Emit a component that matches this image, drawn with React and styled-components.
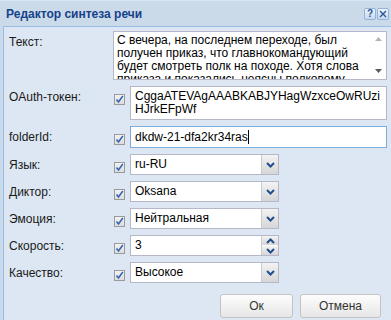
import React from "react";
import styled, { createGlobalStyle } from "styled-components";

const Global = createGlobalStyle`
  html, body { margin: 0; padding: 0; }
  body {
    background: #cbdae9;
    font-family: "Liberation Sans", Arial, sans-serif;
    overflow: hidden;
  }
`;

const Window = styled.div`
  width: 391px;
  height: 320px;
  background: #cbdae9;
  border-top: 1px solid #dbe5f1;
  box-sizing: border-box;
  display: flex;
  flex-direction: column;
  overflow: hidden;
`;

const Header = styled.div`
  height: 25px;
  flex: none;
  display: flex;
  align-items: center;
  justify-content: space-between;
  padding: 0 2px 0 6px;
`;

const Title = styled.div`
  font-size: 12px;
  font-weight: bold;
  color: #15428b;
`;

const Tools = styled.div`
  display: flex;
  gap: 1px;
  margin-top: 1px;
`;

const Tool = styled.div`
  width: 12px;
  height: 12px;
  box-sizing: border-box;
  border: 1px solid #94b4dc;
  border-radius: 2px;
  background: linear-gradient(#eef4fb, #c9d9ee);
  display: flex;
  align-items: center;
  justify-content: center;
  font-size: 10px;
  font-weight: bold;
  color: #2a5594;
  line-height: 1;
`;

const Body = styled.div`
  flex: 1;
  margin-left: 3px;
  border-left: 1px solid #99bbe8;
  border-top: 1px solid #99bbe8;
  background: #dde7f3;
  padding: 4px 4px 0 5px;
  display: flex;
  flex-direction: column;
`;

const Form = styled.div`
  display: flex;
  flex-direction: column;
  gap: 6px;
`;

const Row = styled.div`
  display: grid;
  grid-template-columns: 104px 17px 1fr;
  align-items: start;
`;

const Label = styled.div`
  font-size: 12px;
  line-height: 14px;
  padding-top: 4px;
  color: #1a1a1a;
`;

const CheckCell = styled.div`
  padding-top: 5px;
  padding-left: 1px;
  height: 11px;
`;

const TextBox = styled.div`
  grid-column: 2 / 4;
  height: 49px;
  box-sizing: border-box;
  border: 1px solid #b5b8c8;
  background: #fff;
  display: flex;
`;

const TextContent = styled.div`
  flex: 1;
  overflow: hidden;
  padding: 2px 3px;
  font-size: 12px;
  line-height: 13px;
  color: #000;
`;

const ScrollBar = styled.div`
  width: 15px;
  display: flex;
  flex-direction: column;
  justify-content: space-between;
  align-items: center;
  padding: 5px 0 6px;
`;

const Input = styled.div`
  box-sizing: border-box;
  min-height: 21px;
  border: 1px solid ${(p) => (p.$focus ? "#7eadd9" : "#b5b8c8")};
  background: #fff;
  padding: 3px 4px;
  font-size: 12px;
  line-height: 13px;
  color: #000;
  word-break: break-all;
`;

const Caret = styled.span`
  display: inline-block;
  width: 1px;
  height: 14px;
  background: #000;
  vertical-align: -3px;
`;

const Combo = styled.div`
  width: 149px;
  height: 21px;
  box-sizing: border-box;
  border: 1px solid #b5b8c8;
  background: #fff;
  display: flex;
`;

const ComboText = styled.div`
  flex: 1;
  padding: 3px 4px;
  font-size: 12px;
  line-height: 13px;
  color: #000;
`;

const Trigger = styled.div`
  width: 16px;
  border-left: 1px solid #c8cbd6;
  background: linear-gradient(#f3f3f3, #d6d6d6);
  display: flex;
  align-items: center;
  justify-content: center;
`;

const Spinner = styled.div`
  width: 16px;
  display: flex;
  flex-direction: column;
  gap: 1px;
  border-left: 1px solid #c8cbd6;
  background: #fff;
`;

const SpinHalf = styled.div`
  flex: 1;
  background: linear-gradient(#f3f3f3, #d6d6d6);
  display: flex;
  align-items: center;
  justify-content: center;
`;

const Buttons = styled.div`
  display: flex;
  justify-content: flex-end;
  gap: 7px;
  margin-top: 11px;
  padding-right: 6px;
`;

const Button = styled.button`
  min-width: 73px;
  height: 24px;
  padding: 0 18px;
  box-sizing: border-box;
  border: 1px solid #c3c3c3;
  border-radius: 3px;
  background: linear-gradient(#fdfdfd, #e6e6e6);
  font-family: "Liberation Sans", Arial, sans-serif;
  font-size: 12px;
  color: #333;
`;

const Chevron = ({ up }) => (
  <svg width="9" height="6" viewBox="0 0 9 6">
    <path
      d={up ? "M1 5 L4.5 1.5 L8 5" : "M1 1 L4.5 4.5 L8 1"}
      fill="none"
      stroke="#1f4f8f"
      strokeWidth="2"
    />
  </svg>
);

const Tri = ({ up, color }) => (
  <svg width="7" height="4" viewBox="0 0 7 4">
    <path d={up ? "M0 4 L3.5 0 L7 4 Z" : "M0 0 L3.5 4 L7 0 Z"} fill={color} />
  </svg>
);

const Check = () => (
  <svg width="11" height="11" viewBox="0 0 11 11">
    <defs>
      <linearGradient id="cb" x1="0" y1="0" x2="0" y2="1">
        <stop offset="0" stopColor="#f4f4f4" />
        <stop offset="1" stopColor="#dcdcdc" />
      </linearGradient>
    </defs>
    <rect x="0.5" y="0.5" width="10" height="10" fill="url(#cb)" stroke="#9a9a9a" />
    <path d="M2.5 5.5 L4.5 8 L8.8 2" fill="none" stroke="#3565b5" strokeWidth="1.6" />
  </svg>
);

const CloseIcon = () => (
  <svg width="8" height="8" viewBox="0 0 8 8">
    <path d="M1 1 L7 7 M7 1 L1 7" stroke="#2a5594" strokeWidth="1.4" />
  </svg>
);

const ComboField = ({ value }) => (
  <Combo>
    <ComboText>{value}</ComboText>
    <Trigger>
      <Chevron />
    </Trigger>
  </Combo>
);

const combos = [
  ["Язык:", "ru-RU"],
  ["Диктор:", "Oksana"],
  ["Эмоция:", "Нейтральная"],
];

export default function App() {
  return (
    <>
      <Global />
      <Window>
        <Header>
          <Title>Редактор синтеза речи</Title>
          <Tools>
            <Tool>?</Tool>
            <Tool>
              <CloseIcon />
            </Tool>
          </Tools>
        </Header>
        <Body>
          <Form>
            <Row>
              <Label>Текст:</Label>
              <TextBox>
                <TextContent>
                  С вечера, на последнем переходе, был получен приказ, что
                  главнокомандующий будет смотреть полк на походе. Хотя слова
                  приказа и показались неясны полковому командиру
                </TextContent>
                <ScrollBar>
                  <Tri up color="#b4b4b4" />
                  <Tri color="#5a5a5a" />
                </ScrollBar>
              </TextBox>
            </Row>
            <Row>
              <Label>OAuth-токен:</Label>
              <CheckCell>
                <Check />
              </CheckCell>
              <Input>CggaATEVAgAAABKABJYHagWzxceOwRUziHJrkEFpWf</Input>
            </Row>
            <Row>
              <Label>folderId:</Label>
              <CheckCell>
                <Check />
              </CheckCell>
              <Input $focus>
                dkdw-21-dfa2kr34ras
                <Caret />
              </Input>
            </Row>
            {combos.map(([label, value]) => (
              <Row key={label}>
                <Label>{label}</Label>
                <CheckCell>
                  <Check />
                </CheckCell>
                <ComboField value={value} />
              </Row>
            ))}
            <Row>
              <Label>Скорость:</Label>
              <CheckCell>
                <Check />
              </CheckCell>
              <Combo>
                <ComboText>3</ComboText>
                <Spinner>
                  <SpinHalf>
                    <Chevron up />
                  </SpinHalf>
                  <SpinHalf>
                    <Chevron />
                  </SpinHalf>
                </Spinner>
              </Combo>
            </Row>
            <Row>
              <Label>Качество:</Label>
              <CheckCell>
                <Check />
              </CheckCell>
              <ComboField value="Высокое" />
            </Row>
          </Form>
          <Buttons>
            <Button>Ок</Button>
            <Button>Отмена</Button>
          </Buttons>
        </Body>
      </Window>
    </>
  );
}
